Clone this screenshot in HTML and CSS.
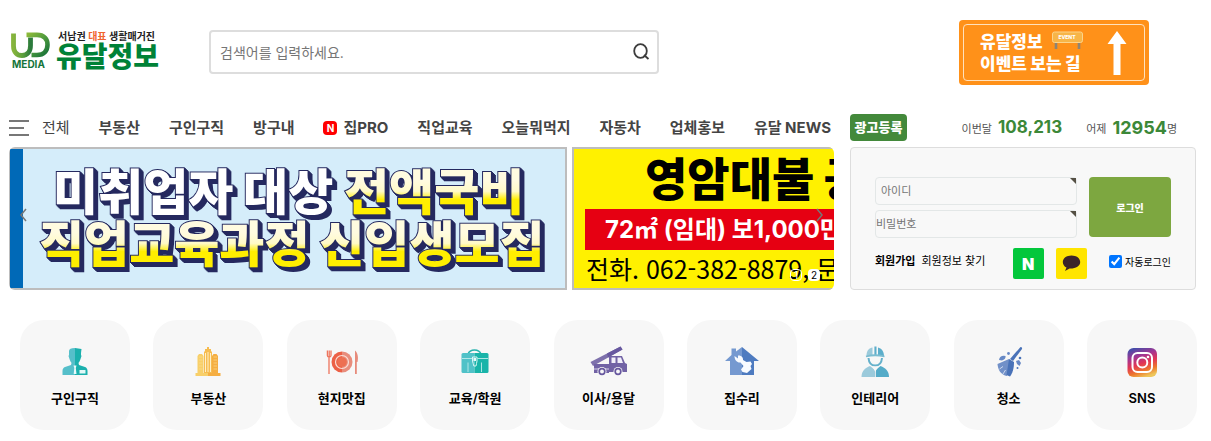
FILE: index.html
```html
<!DOCTYPE html>
<html lang="ko">
<head>
<meta charset="utf-8">
<meta name="viewport" content="width=device-width, initial-scale=1">
<title>유달정보</title>
<link rel="stylesheet" href="styles.css">
</head>
<body>
<div class="page">
  <header class="header">
    <a class="logo" href="#">
      <span class="logo-mark">
        <svg width="40" height="26" viewBox="0 0 40 26" aria-hidden="true">
          <defs>
            <linearGradient id="lg-u" x1="0" y1="0" x2="1" y2="0"><stop offset="0" stop-color="#86b43c"/><stop offset=".55" stop-color="#5c9f3d"/><stop offset="1" stop-color="#2b7a3c"/></linearGradient>
            <linearGradient id="lg-d" x1="0" y1="0" x2="1" y2="1"><stop offset="0" stop-color="#8dba3a"/><stop offset=".5" stop-color="#4f9a3d"/><stop offset="1" stop-color="#16713a"/></linearGradient>
          </defs>
          <path d="M2.500 1.500V14C2.500 20 6 23.500 11 23.500C16.500 23.500 19.500 19.500 19.500 13.500V5.500" fill="none" stroke="url(#lg-u)" stroke-width="4.800"/>
          <path d="M15.500 2.900H26C33 2.900 36.500 7 36.500 12.800C36.500 18.800 33 23 26 23H20.500" fill="none" stroke="url(#lg-d)" stroke-width="4.600"/>
        </svg>
        <span class="logo-media">MEDIA</span>
      </span>
      <span class="logo-text">
        <span class="logo-tag">서남권 <em>대표</em> 생활매거진</span>
        <strong class="logo-name">유달정보</strong>
      </span>
    </a>
    <form class="search" role="search">
      <input type="search" class="search-input" aria-label="검색어" placeholder="검색어를 입력하세요.">
      <button type="button" class="search-button" aria-label="검색">
        <svg width="18" height="18" viewBox="0 0 18 18" fill="none" stroke="#3c3c3c" stroke-width="1.800"><ellipse cx="8.500" cy="8" rx="6.300" ry="6.800"/><path d="M12 12L16.500 16"/></svg>
      </button>
    </form>
    <a class="event" href="#">
      <span class="event-inner">
        <span class="event-text">
          <span class="event-line">유달정보
            <svg width="34" height="20" viewBox="0 0 34 20" aria-hidden="true">
              <path d="M5 11V18M28 11V18" stroke="#8d8475" stroke-width="2.600"/>
              <rect x="1.500" y="1" width="30" height="10.500" rx="2" fill="#f7b548" stroke="#fbd48c"/>
              <text class="event-sign" x="16" y="8" text-anchor="middle">EVENT</text>
            </svg>
          </span>
          <span class="event-line">이벤트 보는 길</span>
        </span>
        <svg width="20" height="46" viewBox="0 0 20 46" aria-hidden="true"><path d="M10 1L19.500 14H13.500V45H6.500V14H.5Z" fill="#fff"/></svg>
      </span>
    </a>
  </header>

  <div class="main">
    <nav class="nav">
      <a class="nav-all" href="#">
        <svg width="21" height="16" viewBox="0 0 21 16" aria-hidden="true"><path d="M0 1H20M0 8H15M0 15H20" stroke="#777" stroke-width="1.800"/></svg>
        전체
      </a>
      <a href="#">부동산</a>
      <a href="#">구인구직</a>
      <a href="#">방구내</a>
      <a class="nav-new" href="#"><span class="new-badge">N</span>집PRO</a>
      <a href="#">직업교육</a>
      <a href="#">오늘뭐먹지</a>
      <a href="#">자동차</a>
      <a href="#">업체홍보</a>
      <a href="#">유달 NEWS</a>
    </nav>
    <div class="status">
      <a class="ad-button" href="#">광고등록</a>
      <p class="stats">
        <span class="stat">이번달 <b class="count">108,213</b></span>
        <span class="stat">어제 <b class="count count-day">12954</b>명</span>
      </p>
    </div>

    <section class="slider" aria-label="광고">
      <a class="slide slide-job" href="#">
        <svg class="slide-art" height="139" aria-hidden="true">
          <defs>
            <linearGradient id="gold" x1="0" y1="0" x2="0" y2="1"><stop offset=".3" stop-color="#fffbe0"/><stop offset=".48" stop-color="#fffac8"/><stop offset=".62" stop-color="#ffee00"/></linearGradient>
          </defs>
          <g class="slide-title">
            <text x="43" y="61" fill="#fff">미취업자 대상</text>
            <text x="334" y="61" fill="url(#gold)">전액국비</text>
            <text x="29" y="113" fill="url(#gold)">직업교육과정 신입생모집</text>
          </g>
        </svg>
      </a>
      <a class="slide slide-lease" href="#">
        <strong class="lease-title">영암대불 공장</strong>
        <span class="lease-price">72㎡ (임대) 보1,000만</span>
        <span class="lease-phone">전화. 062-382-8879, 문자</span>
      </a>
      <button type="button" class="arrow arrow-prev" aria-label="이전"><svg width="8" height="14" viewBox="0 0 8 14"><path d="M7 1L2 7L7 13" fill="none" stroke="#777" stroke-width="1.500"/></svg></button>
      <button type="button" class="arrow arrow-next" aria-label="다음"><svg width="8" height="14" viewBox="0 0 8 14"><path d="M1 1L6 7L1 13" fill="none" stroke="#777" stroke-width="1.500"/></svg></button>
      <div class="pager"><button type="button" class="page-dot page-dot-off">1</button><button type="button" class="page-dot">2</button></div>
    </section>

    <form class="login">
      <div class="login-top">
        <div class="fields">
          <div class="field"><input class="field-input field-id" type="text" aria-label="아이디" placeholder="아이디"></div>
          <div class="field"><input class="field-input" type="password" aria-label="비밀번호" placeholder="비밀번호"></div>
        </div>
        <button type="button" class="login-button">로그인</button>
      </div>
      <div class="login-bottom">
        <div class="account"><a class="join" href="#">회원가입</a><a href="#">회원정보 찾기</a></div>
        <div class="social">
          <a class="naver" href="#">N</a>
          <a class="kakao" href="#" aria-label="카카오 로그인"><svg width="19" height="17" viewBox="0 0 19 17"><path d="M9.500 .5C4.500 .5 .8 3.300 .8 7C.8 9.600 2.300 11.500 4.500 12.600L3 16L7.600 13.500C13.500 13.800 18.200 11.200 18.200 7C18.200 3.300 14.500 .5 9.500 .5Z" fill="#3b2529"/></svg></a>
        </div>
        <label class="auto"><input type="checkbox" checked>자동로그인</label>
      </div>
    </form>
  </div>

  <nav class="menu" aria-label="카테고리">
    <a class="card" href="#">
      <svg width="36" height="36" viewBox="0 0 36 36" aria-hidden="true">
        <path d="M18 4C14 4 12 5 12 7V11L11.500 12L12.500 15C13 17 14 18 14.500 19L14 21L8 23C6.500 23.500 5.500 25 5.500 27V31H18Z" fill="#56bfca"/>
        <path d="M18 4L24.500 5L24 9V11L24.500 12L23.500 15C23 17 22 18 21.500 19L22 21L28 23C29.500 23.500 30.500 25 30.500 27V31H18Z" fill="#1bb0ad"/>
        <path d="M16.500 21.500H19.500L18.800 24L19.500 30H16.700L17.300 24Z" fill="#e9fafa"/><rect x="22.500" y="26" width="6" height="3.500" fill="#e2f8f7"/>
      </svg>
      구인구직
    </a>
    <a class="card" href="#">
      <svg width="36" height="36" viewBox="0 0 36 36" aria-hidden="true">
        <path d="M7.500 12L9 10H12L13.500 12V29H7.500Z" fill="#f8cf69"/><path d="M22 12L23.500 10H26.500L28 12V29H22Z" fill="#f5ae42"/>
        <path d="M14 8L15 7V5H17V3H19V5H21V7L22 8V29H14Z" fill="#f6bc50"/><path d="M15.500 9V28M18 8V28M20.500 9V28" stroke="#fff0c8" stroke-width="1"/>
        <path d="M9 13H12.500M9 16H12.500M9 19H12.500M9 22H12.500M9 25H12.500M23.500 13H27M23.500 16H27M23.500 19H27M23.500 22H27M23.500 25H27" stroke="#fbdc8f" stroke-width=".7"/>
        <rect x="5.500" y="29" width="12.500" height="3" fill="#f8cf69"/><rect x="18" y="29" width="12.500" height="3" fill="#f5ae42"/>
      </svg>
      부동산
    </a>
    <a class="card" href="#">
      <svg width="36" height="36" viewBox="0 0 36 36" aria-hidden="true">
        <path d="M18 7.500A10.300 10.300 0 0 0 18 28.500Z" fill="#ec6046"/><path d="M18 7.500A10.300 10.300 0 0 1 18 28.500Z" fill="#e88d7c"/>
        <circle cx="18" cy="18" r="6.500" fill="none" stroke="#fbded5" stroke-width="1.200"/><circle cx="18" cy="18" r="4.800" fill="#ed7052"/>
        <path d="M3.400 6.500V11.500C3.400 12.800 4 13 5 13.200V30M7 6.500V11.500C7 12.600 6.500 13 5.200 13.200M5.200 6.500V13" fill="none" stroke="#ee755e" stroke-width="1.300"/>
        <path d="M31 6.500C34 9 34.500 14 33.500 18H32.800V30H31Z" fill="#e78b7b"/>
      </svg>
      현지맛집
    </a>
    <a class="card" href="#">
      <svg width="36" height="36" viewBox="0 0 36 36" aria-hidden="true">
        <path d="M11 10C13 4.500 22 4.500 24 10" fill="none" stroke="#27b3ae" stroke-width="1.500"/>
        <path d="M6 9H17.500V29H6Q4.500 29 4.500 27.500V10.500Q4.500 9 6 9Z" fill="#50c2c8"/><path d="M17.500 9H30Q31.500 9 31.500 10.500V27.500Q31.500 29 30 29H17.500Z" fill="#19b4a9"/>
        <path d="M5 14.500H15M20.500 14.500H31M11 18.500V28M24.500 18.500V28" stroke="#bcebea" stroke-width=".9"/>
        <path d="M15.500 13H20V17C20 19 19 20 19 22H16.800C16.800 20 15.500 19 15.500 17Z" fill="none" stroke="#d6f6f4" stroke-width="1"/><rect x="16.500" y="14" width="2.500" height="3" fill="#e4faf9"/>
      </svg>
      교육/학원
    </a>
    <a class="card" href="#">
      <svg width="38" height="36" viewBox="0 0 38 36" aria-hidden="true">
        <path d="M.5 18L30.500 2.500L32.500 5.500L3 22Z" fill="#7e71ac"/><path d="M17 9.500L30.500 2.500L32.500 5.500L18 13.600Z" fill="#67589f"/>
        <path d="M4 20H19V29H4ZM19 12H32L35 19L37 20V28H19Z" fill="#7162a5"/><path d="M21.500 13.500H25.500V19H21.500ZM27.500 13.500H31L33 19H27.500Z" fill="#f2effa"/><path d="M4 25H19" stroke="#d6cfe9"/>
        <circle cx="12" cy="27.500" r="4.500" fill="#f7f7f7"/><circle cx="28" cy="27.500" r="4.500" fill="#f7f7f7"/>
        <circle cx="12" cy="27.500" r="2.800" fill="#f7f7f7" stroke="#67589f" stroke-width="1.700"/><circle cx="28" cy="27.500" r="2.800" fill="#f7f7f7" stroke="#67589f" stroke-width="1.700"/>
      </svg>
      이사/용달
    </a>
    <a class="card" href="#">
      <svg width="36" height="36" viewBox="0 0 36 36" aria-hidden="true">
        <path d="M18 3L12 7.500V4.500H7.500V11L1 17H6V31H18Z" fill="#7599d0"/><path d="M18 3L35 17H30V31H18Z" fill="#4e7bc0"/>
        <path d="M10.500 12L14 14.500V11.500C17 11 19.500 13.500 19 16L22.500 18L26.500 17.500L28 20L26.500 22L27.500 25L23 29L18.500 28L17 25.500L19.500 22L16.500 18.500C13.500 19 10.500 16.500 10.500 12Z" fill="#f8fbff"/>
      </svg>
      집수리
    </a>
    <a class="card" href="#">
      <svg width="36" height="36" viewBox="0 0 36 36" aria-hidden="true">
        <path d="M9.500 12C9.500 6 12.500 4 15.500 3.500V11H17V2.500H18V12Z" fill="#9bcadb"/><path d="M18 2.500H19.500V11H21V3.500C24.500 4.500 27 7 27 12H18Z" fill="#5caecb"/>
        <path d="M9 12.500Q18 10 27.500 12.500" stroke="#7cbdd1" stroke-width="1.800" fill="none"/>
        <path d="M11.500 14C12 20 14.500 21.500 18.200 21.500C22 21.500 24.500 20 25 14" fill="none" stroke="#65b1cb" stroke-width="2"/>
        <path d="M13 22L18 26V33H4.500C4.500 27 8 24 13 22Z" fill="#9bcadb"/><path d="M23.500 22L18.800 26V33H32C32 27 28.500 24 23.500 22Z" fill="#54abc8"/><path d="M15.500 22.500L18.300 28L21 22.500Z" fill="#f7f7f7"/>
      </svg>
      인테리어
    </a>
    <a class="card" href="#">
      <svg width="36" height="36" viewBox="0 0 36 36" aria-hidden="true">
        <path d="M19 15L29.500 3Q31.500 3 31 5L22 17Z" fill="#4972b8"/>
        <path d="M18 15L6.500 20C7 26 10 31 16 32L20 18Z" fill="#7190c8"/><path d="M18 15L23 18C23 25 21.500 29 19 32.500L15.500 31Z" fill="#4972b8"/>
        <path d="M8 16Q9 11 14.500 12Q15 15 11 16.500ZM25 17L28 16L30 19L28.500 22L26 20Z" fill="#6688c5"/><circle cx="17.500" cy="9.500" r="1.400" fill="#6688c5"/><circle cx="29" cy="14" r="1.300" fill="#4972b8"/><circle cx="26.500" cy="24" r="1" fill="#4972b8"/>
        <path d="M8.500 25L12 22.500M12 30L14.500 26" stroke="#e4ebf8" stroke-width=".8"/>
      </svg>
      청소
    </a>
    <a class="card" href="#">
      <svg width="36" height="36" viewBox="0 0 36 36" aria-hidden="true">
        <defs>
          <linearGradient id="ig" x1=".25" y1="0" x2=".6" y2="1"><stop offset="0" stop-color="#444eaa"/><stop offset=".3" stop-color="#a43591"/><stop offset=".55" stop-color="#e23655"/><stop offset=".8" stop-color="#ed792d"/><stop offset="1" stop-color="#eec65a"/></linearGradient>
        </defs>
        <rect x="3.500" y="4" width="29.500" height="29" rx="6" fill="url(#ig)"/>
        <rect x="8.500" y="9" width="19.500" height="19" rx="5" fill="none" stroke="#fff" stroke-width="2"/><circle cx="18.300" cy="18.500" r="5" fill="none" stroke="#fff" stroke-width="2"/><circle cx="24" cy="13" r="1.300" fill="#fff"/>
      </svg>
      SNS
    </a>
  </nav>
</div>
</body>
</html>
```
FILE: styles.css
```css
* { box-sizing: border-box; }
body {
  margin: 0;
  background: #fff;
  color: #000;
  font-family: Inter, "Noto Sans CJK KR", sans-serif;
  font-size: 11px;
}
a { color: inherit; text-decoration: none; }
button, input { font: inherit; }
button { padding: 0; border: 0; cursor: pointer; }
svg { display: block; flex: none; }
.page { padding: 20px 14px 11px 9px; }

.header { display: flex; align-items: flex-start; height: 94px; padding-right: 48px; }
.logo { display: flex; gap: 5px; width: 200px; flex: none; padding: 9px 0 0 2px; }
.logo-mark { display: flex; flex-direction: column; width: 40px; padding-top: 3px; }
.logo-media { padding-left: 1px; font-size: 10px; font-weight: 700; line-height: 13px; color: #16753a; }
.logo-text { display: flex; flex-direction: column; white-space: nowrap; }
.logo-tag { padding-left: 2px; font-size: 10px; font-weight: 600; line-height: 14px; color: #222; }
.logo-tag em { font-style: normal; color: #f0642f; }
.logo-name { font-size: 28px; font-weight: 900; line-height: 28px; color: #008237; }
.search {
  display: flex; align-items: center;
  width: 450px; height: 44px; margin-top: 10px; padding: 0 7px 0 9px;
  border: 2px solid #ddd; border-radius: 4px;
}
.search-input { flex: 1; min-width: 0; padding: 0; border: 0; outline: 0; background: none; font-size: 14px; }
.search-input::placeholder { color: #757575; }
.search-button { background: none; }
.event { width: 190px; height: 65px; margin-left: auto; padding: 4px; border-radius: 4px; background: #ff9119; color: #fff; }
.event-inner {
  display: flex; align-items: center; justify-content: space-between;
  height: 100%; padding: 0 17px 0 16px;
  border: 1px solid #ffe1bc; border-radius: 4px;
}
.event-text { display: flex; flex-direction: column; }
.event-line { display: flex; gap: 8px; font-size: 17px; font-weight: 900; line-height: 22px; white-space: nowrap; }
.event-sign { font-size: 5px; font-weight: 800; fill: #fff; }

.main { display: grid; grid-template-columns: minmax(0, 825fr) minmax(0, 346fr); column-gap: 16px; row-gap: 6px; padding-right: 1px; }
.nav {
  display: flex; align-items: center; justify-content: space-between;
  padding-right: 3px; white-space: nowrap;
  font-size: 15px; font-weight: 700; line-height: 27px; color: #444;
}
.nav-all { display: flex; align-items: center; gap: 12px; font-weight: 400; }
.nav-new { display: flex; align-items: center; gap: 6px; }
.new-badge { width: 14px; height: 14px; border-radius: 4px; background: #f00; color: #fff; font-size: 10px; line-height: 14px; text-align: center; }
.status { display: flex; align-items: center; justify-content: space-between; padding-right: 19px; white-space: nowrap; }
.ad-button { width: 57px; border-radius: 4px; background: #43893b; color: #fff; font-size: 13px; font-weight: 900; line-height: 27px; text-align: center; }
.stats { display: flex; align-items: center; gap: 24px; margin: 0; color: #555; }
.stat { display: flex; align-items: center; }
.count { margin-left: 6px; color: #3c8838; font-size: 17px; font-weight: 700; line-height: 27px; }
.count-day { font-size: 18px; }

.slider { position: relative; display: flex; gap: 5px; height: 143px; overflow: hidden; border-radius: 6px; }
.slide { flex: none; width: 558px; overflow: hidden; border: 2px solid #bdbdbd; }
.slide-job { border-left-width: 1px; background: linear-gradient(90deg, #0069b7 13px, #d5edfa 13px); }
.slide-art { width: 100%; }
.slide-title { font-size: 49px; font-weight: 900; stroke: #25295f; stroke-width: 2px; paint-order: stroke; filter: drop-shadow(1px 1px 0 #25295f) drop-shadow(1px 1px 0 #25295f) drop-shadow(2px 2px 0 #25295f); }
.slide-lease { display: flex; flex-direction: column; padding-left: 11px; background: #fff100; white-space: nowrap; }
.lease-title { padding-left: 60px; font-size: 46px; font-weight: 900; line-height: 60px; }
.lease-price { padding-left: 20px; background: #e60012; color: #fff; font-size: 24px; font-weight: 700; line-height: 41px; }
.lease-phone { padding-left: 1px; font-family: "Noto Sans CJK KR", sans-serif; font-size: 25px; line-height: 36px; }
.arrow { position: absolute; top: 61px; background: none; }
.arrow-prev { left: 10px; }
.arrow-next { right: 10px; }
.pager { position: absolute; right: 14px; bottom: 9px; display: flex; gap: 6px; }
.page-dot { width: 12px; height: 12px; border-radius: 4px; background: #fff; color: #000; font-size: 10px; line-height: 12px; }
.page-dot-off { border: 1px solid #fff; background: none; color: #fff; line-height: 10px; }

.login { height: 143px; padding: 29px 24px 10px; border: 1px solid #ddd; border-radius: 4px; background: #f8f8f8; }
.login-top { display: flex; gap: 12px; }
.fields { display: flex; flex: 1; flex-direction: column; gap: 5px; min-width: 0; }
.field { position: relative; display: flex; }
.field::after { content: ""; position: absolute; top: 1px; right: 1px; border-top: 6px solid #555044; border-left: 6px solid transparent; }
.field-input { width: 100%; height: 28px; padding: 0; border: 1px solid #e3e7e7; border-radius: 4px; background: #f8f8f8; }
.field-id { padding-left: 5px; }
.field-input::placeholder { color: #757575; }
.login-button { width: 82px; height: 60px; border-radius: 4px; background: #7da740; color: #fff; font-size: 10px; font-weight: 900; }
.login-bottom { display: flex; align-items: center; justify-content: space-between; margin-top: 10px; white-space: nowrap; }
.account { display: flex; gap: 6px; padding-bottom: 8px; }
.join { font-weight: 700; }
.social { display: flex; gap: 12px; padding-left: 5px; }
.naver, .kakao { display: flex; align-items: center; justify-content: center; width: 31px; height: 31px; border-radius: 2px; }
.naver { background: #03c73c; color: #fff; font-size: 16px; font-weight: 900; }
.kakao { background: #ffe500; }
.auto { display: flex; align-items: center; gap: 3px; padding-bottom: 4px; font-size: 10px; }
.auto input { width: 13px; height: 13px; margin: 0; accent-color: #0075ff; }

.menu { display: flex; justify-content: space-between; margin-top: 30px; padding-left: 11px; }
.card {
  display: flex; flex-direction: column; align-items: center; gap: 8px;
  width: 110px; height: 110px; padding-top: 24px;
  border-radius: 24px; background: #f7f7f7;
  font-size: 13px; font-weight: 600; line-height: 20px;
}
```
